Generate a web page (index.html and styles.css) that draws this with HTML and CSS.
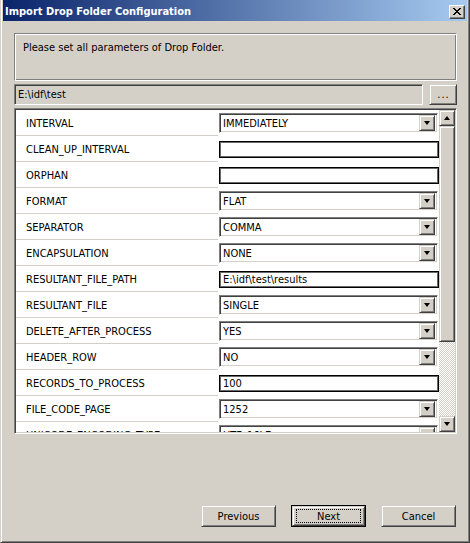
FILE: index.html
```html
<!DOCTYPE html>
<html>
<head>
<meta charset="utf-8">
<title>Import Drop Folder Configuration</title>
<link rel="stylesheet" href="styles.css">
</head>
<body>
<div class="window">
  <div class="titlebar">
    <span class="title">Import Drop Folder Configuration</span>
    <span class="close">
      <svg width="8" height="7" viewBox="0 0 8 7" shape-rendering="crispEdges">
        <rect x="0" y="0" width="2" height="1"/><rect x="6" y="0" width="2" height="1"/>
        <rect x="1" y="1" width="2" height="1"/><rect x="5" y="1" width="2" height="1"/>
        <rect x="2" y="2" width="4" height="1"/>
        <rect x="3" y="3" width="2" height="1"/>
        <rect x="2" y="4" width="4" height="1"/>
        <rect x="1" y="5" width="2" height="1"/><rect x="5" y="5" width="2" height="1"/>
        <rect x="0" y="6" width="2" height="1"/><rect x="6" y="6" width="2" height="1"/>
      </svg>
    </span>
  </div>
  <div class="body">
    <div class="message">Please set all parameters of Drop Folder.</div>
    <div class="pathrow">
      <div class="pathfield">E:\idf\test</div>
      <div class="raised browse">...</div>
    </div>
    <div class="gridframe">
      <div class="grid">
        <div class="row"><div class="label">INTERVAL</div><div class="value"><div class="combo"><span class="ctext">IMMEDIATELY</span><span class="raised ddbtn"><i class="tri-down"></i></span></div></div></div>
        <div class="row"><div class="label">CLEAN_UP_INTERVAL</div><div class="value"><div class="textbox"></div></div></div>
        <div class="row"><div class="label">ORPHAN</div><div class="value"><div class="textbox"></div></div></div>
        <div class="row"><div class="label">FORMAT</div><div class="value"><div class="combo"><span class="ctext">FLAT</span><span class="raised ddbtn"><i class="tri-down"></i></span></div></div></div>
        <div class="row"><div class="label">SEPARATOR</div><div class="value"><div class="combo"><span class="ctext">COMMA</span><span class="raised ddbtn"><i class="tri-down"></i></span></div></div></div>
        <div class="row"><div class="label">ENCAPSULATION</div><div class="value"><div class="combo"><span class="ctext">NONE</span><span class="raised ddbtn"><i class="tri-down"></i></span></div></div></div>
        <div class="row"><div class="label">RESULTANT_FILE_PATH</div><div class="value"><div class="textbox">E:\idf\test\results</div></div></div>
        <div class="row"><div class="label">RESULTANT_FILE</div><div class="value"><div class="combo"><span class="ctext">SINGLE</span><span class="raised ddbtn"><i class="tri-down"></i></span></div></div></div>
        <div class="row"><div class="label">DELETE_AFTER_PROCESS</div><div class="value"><div class="combo"><span class="ctext">YES</span><span class="raised ddbtn"><i class="tri-down"></i></span></div></div></div>
        <div class="row"><div class="label">HEADER_ROW</div><div class="value"><div class="combo"><span class="ctext">NO</span><span class="raised ddbtn"><i class="tri-down"></i></span></div></div></div>
        <div class="row"><div class="label">RECORDS_TO_PROCESS</div><div class="value"><div class="textbox">100</div></div></div>
        <div class="row"><div class="label">FILE_CODE_PAGE</div><div class="value"><div class="combo"><span class="ctext">1252</span><span class="raised ddbtn"><i class="tri-down"></i></span></div></div></div>
        <div class="row"><div class="label">UNICODE_ENCODING_TYPE</div><div class="value"><div class="combo"><span class="ctext">UTF_16LE</span><span class="raised ddbtn"><i class="tri-down"></i></span></div></div></div>
      </div>
      <div class="vscroll">
        <div class="raised sbtn"><i class="tri-up"></i></div>
        <div class="raised thumb"></div>
        <div class="track"></div>
        <div class="raised sbtn"><i class="tri-down"></i></div>
      </div>
    </div>
    <div class="buttons">
      <div class="raised pbtn">Previous</div>
      <div class="pbtn default"><div class="raised inner"><span class="focus">Next</span></div></div>
      <div class="raised pbtn">Cancel</div>
    </div>
  </div>
</div>
</body>
</html>
```

FILE: styles.css
```css
* { box-sizing: border-box; }
html, body { margin: 0; padding: 0; }
body {
  width: 470px;
  height: 543px;
  overflow: hidden;
  background: #d4d0c8;
  font-family: "DejaVu Sans Condensed", "DejaVu Sans", "Liberation Sans", sans-serif;
  font-stretch: condensed;
  font-size: 11px;
  color: #000;
}
.window {
  height: 543px;
  display: flex;
  flex-direction: column;
  border-style: solid;
  border-width: 0 1px 1px 1px;
  border-color: #d4d0c8 #404040 #404040 #d4d0c8;
  box-shadow: inset 1px 0 0 #fff, inset -1px -1px 0 #808080;
  padding: 0 2px 2px 2px;
}
.titlebar {
  height: 21px;
  flex: none;
  display: flex;
  align-items: flex-start;
  justify-content: space-between;
  background: linear-gradient(to right, #0a246a, #a6caf0);
  color: #fff;
  font-weight: bold;
}
.title { padding: 2px 0 0 2px; line-height: 20px; }
.close {
  width: 16px;
  height: 14px;
  margin: 5px 2px 0 0;
  display: flex;
  align-items: center;
  justify-content: center;
  background: #d4d0c8;
  border: 1px solid;
  border-color: #fff #404040 #404040 #fff;
  box-shadow: inset -1px -1px 0 #808080;
  padding: 0 1px 1px 0;
}
.close svg { fill: #000; display: block; }
.body {
  flex: 1;
  display: flex;
  flex-direction: column;
  padding: 12px 10px 0 11px;
}
.raised {
  background: #d4d0c8;
  border: 1px solid;
  border-color: #d4d0c8 #404040 #404040 #d4d0c8;
  box-shadow: inset 1px 1px 0 #fff, inset -1px -1px 0 #808080;
}
.message {
  height: 48px;
  border: 1px solid;
  border-color: #808080 #fff #fff #808080;
  box-shadow: inset 1px 1px 0 #fff, inset -1px -1px 0 #808080;
  padding: 7px 0 0 8px;
}
.pathrow {
  margin-top: 3px;
  height: 21px;
  display: flex;
}
.pathfield {
  flex: 1;
  border: 1px solid;
  border-color: #808080 #fff #fff #808080;
  box-shadow: inset 1px 1px 0 #404040, inset -1px -1px 0 #d4d0c8;
  padding: 3px 0 0 3px;
}
.browse {
  width: 28px;
  margin-left: 6px;
  text-align: center;
  line-height: 19px;
  letter-spacing: 1px;
  padding-left: 1px;
}
.gridframe {
  margin-top: 3px;
  height: 326px;
  display: flex;
  border: 1px solid;
  border-color: #808080 #fff #fff #808080;
  box-shadow: inset 1px 1px 0 #404040, inset -1px -1px 0 #d4d0c8;
  padding: 1px;
  background: #fff;
}
.grid {
  flex: 1;
  height: 322px;
  overflow: hidden;
}
.row {
  display: flex;
  height: 26px;
}
.label {
  width: 202px;
  height: 26px;
  border-bottom: 1px solid #d4d0c8;
  padding-left: 10px;
  line-height: 27px;
}
.value {
  flex: 1;
  padding-left: 1px;
}
.combo {
  margin-top: 3px;
  width: 219px;
  height: 20px;
  display: flex;
  align-items: center;
  justify-content: space-between;
  border: 1px solid;
  border-color: #808080 #fff #fff #808080;
  box-shadow: inset 1px 1px 0 #404040, inset -1px -1px 0 #d4d0c8;
  padding: 2px;
  background: #fff;
}
.ctext { padding: 1px 0 0 1px; line-height: 16px; }
.ddbtn {
  width: 16px;
  height: 16px;
  display: flex;
  align-items: center;
  justify-content: center;
}
.tri-down, .tri-up {
  display: block;
  width: 0;
  height: 0;
  border-left: 3.5px solid transparent;
  border-right: 3.5px solid transparent;
}
.tri-down { border-top: 4px solid #000; }
.tri-up { border-bottom: 4px solid #000; }
.textbox {
  margin-top: 5px;
  width: 220px;
  height: 17px;
  border: 1px solid #000;
  box-shadow: inset 0 0 0 1px #6a6a6a;
  padding: 0 0 0 3px;
  line-height: 16px;
}
.vscroll {
  width: 16px;
  display: flex;
  flex-direction: column;
}
.sbtn {
  height: 16px;
  flex: none;
  display: flex;
  align-items: center;
  justify-content: center;
}
.thumb { height: 216px; flex: none; }
.track {
  flex: 1;
  background-color: #d4d0c8;
  background-image: conic-gradient(#fff 25%, transparent 0 50%, #fff 0 75%, transparent 0);
  background-size: 2px 2px;
}
.buttons {
  margin-top: 71px;
  display: flex;
  justify-content: flex-end;
  gap: 15px;
  padding-right: 1px;
}
.pbtn {
  width: 75px;
  height: 22px;
  text-align: center;
  line-height: 21px;
}
.default {
  border: 1px solid #000;
}
.default .inner {
  height: 20px;
  display: flex;
  align-items: center;
  justify-content: center;
  padding: 3px;
}
.focus {
  flex: 1;
  height: 14px;
  line-height: 13px;
  border: 1px dotted #000;
}
```
